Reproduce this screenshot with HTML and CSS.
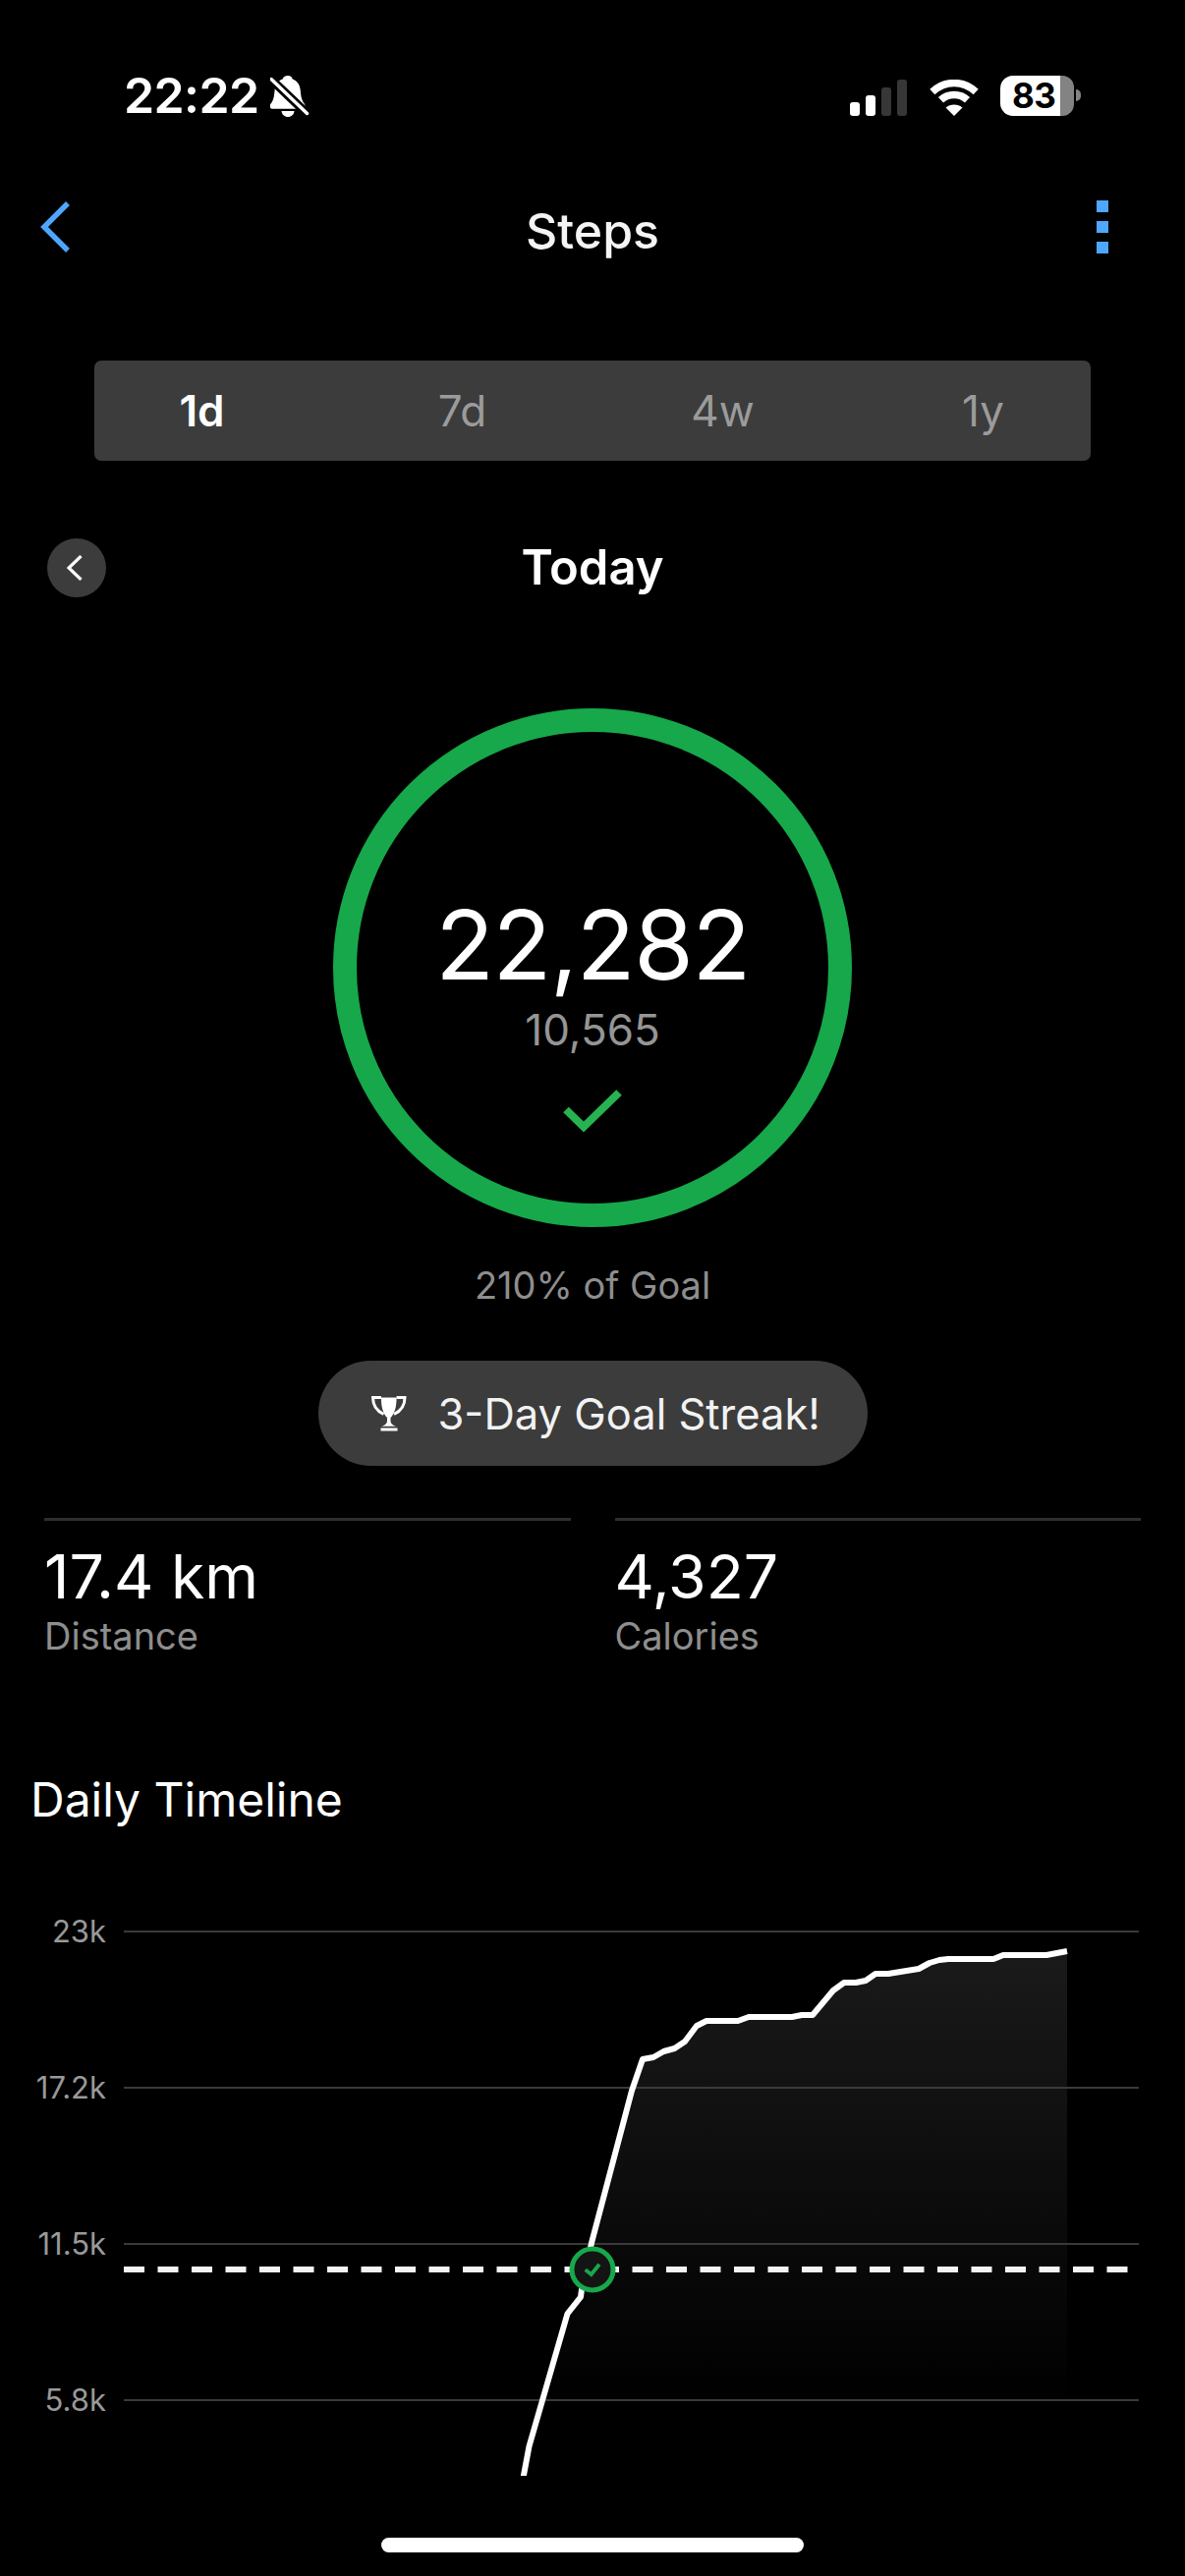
FILE: index.html
```html
<!DOCTYPE html>
<html lang="en">
<head>
<meta charset="utf-8">
<title>Steps</title>
<link rel="stylesheet" href="styles.css">
</head>
<body>
<main class="screen">
  <header class="status">
    <span class="clock">22:22</span>
    <svg class="bell" viewBox="0 0 40 44" aria-hidden="true">
      <path class="white" d="M18 1c2.700 0 4.200 1.500 4.700 3.500 5 1.800 7.500 6 8 11 .4 5 .9 9 2.600 12 .8 1.500 2.200 2.500 2.200 4.300 0 1.700-1.100 3-3 3H2.500c-1.800 0-2.900-1.300-2.900-3 0-1.800 1.600-2.800 2.400-4.300 1.700-3 2.200-7 2.600-12 .5-5 3-9.200 8-11C13.100 2.500 15.300 1 18 1z"/>
      <path class="white" d="M11.500 37h13c-.3 3.500-3 6-6.500 6s-6.200-2.500-6.500-6z"/>
      <path class="gap" d="M-2 2 40 42"/>
      <path class="slash" d="M1 4.500 37.500 39.500"/>
    </svg>
    <div class="status-right">
      <div class="signal">
        <i class="bar b1"></i><i class="bar b2"></i><i class="bar b3 off"></i><i class="bar b4 off"></i>
      </div>
      <svg class="wifi" viewBox="0 0 50 37" aria-hidden="true">
        <path class="wifi-arc outer" d="M2.800 12.500C16 .5 34 .5 47.200 12.500"/>
        <path class="wifi-arc" d="M11.500 20.800C19 13.800 31 13.800 38.500 20.800"/>
        <path class="white" d="M25 37 16.500 28.500C21 24.500 29 24.500 33.500 28.500z"/>
      </svg>
      <div class="battery"><span class="battery-level">83</span><i class="battery-rest"></i><i class="battery-nub"></i></div>
    </div>
  </header>

  <nav class="nav">
    <svg class="chevron" viewBox="0 0 30 52" aria-hidden="true"><path d="M28 2 4 26l24 24"/></svg>
    <h1 class="nav-title">Steps</h1>
    <div class="dots"><i></i><i></i><i></i></div>
  </nav>

  <div class="tabs">
    <span class="tab active">1d</span>
    <span class="tab">7d</span>
    <span class="tab">4w</span>
    <span class="tab">1y</span>
  </div>

  <div class="date-row">
    <span class="round-back">
      <svg viewBox="0 0 16 26" aria-hidden="true"><path d="M14.500 1 2 13l12.500 12"/></svg>
    </span>
    <h2 class="date-title">Today</h2>
    <span></span>
  </div>

  <section class="ring">
    <div class="ring-value">22,282</div>
    <div class="ring-goal">10,565</div>
    <svg class="ring-check" viewBox="0 0 60 44" aria-hidden="true"><path d="M3 20.500 21 38 57 3"/></svg>
  </section>

  <p class="goal-pct">210% of Goal</p>

  <div class="pill">
    <svg class="trophy" viewBox="0 0 36 37" aria-hidden="true">
      <path class="white" d="M10 2.500h15.500c.3 9-2 17-6 20.500v3.500c0 2 1.800 4 5.500 5.200H10.500c3.700-1.200 5.500-3.200 5.500-5.200V23C12 19.500 9.700 11.500 10 2.500z"/>
      <path class="white" d="M9.500 33.500h17v3h-17z"/>
      <path class="handle" d="M10 2.500H1.500c0 8.500 3.500 13.500 11 17M25.500 2.500H34c0 8.500-3.500 13.500-11 17"/>
    </svg>
    <span class="pill-text">3-Day Goal Streak!</span>
  </div>

  <section class="stats">
    <div class="stat">
      <div class="stat-value">17.4 km</div>
      <div class="stat-label">Distance</div>
    </div>
    <div class="stat">
      <div class="stat-value">4,327</div>
      <div class="stat-label">Calories</div>
    </div>
  </section>

  <h3 class="section-title">Daily Timeline</h3>

  <svg class="chart" viewBox="0 1940 1206 600" aria-label="Daily timeline chart">
    <defs>
      <linearGradient id="areaFade" x1="0" y1="1985" x2="0" y2="2450" gradientUnits="userSpaceOnUse">
        <stop offset="0" stop-color="#1a1a1a"/>
        <stop offset="1" stop-color="#000"/>
      </linearGradient>
      <clipPath id="plotClip"><rect x="0" y="1940" width="1206" height="580"/></clipPath>
    </defs>
    <path class="area" fill="url(#areaFade)" d="M533 2520 538.500 2490 577.500 2355 591 2338 592 2330 602 2283 643 2128 654 2096 665 2094 675.500 2088 686.500 2085 697 2078 709 2062 719 2057 751 2057 762 2053 806 2053 816 2051 827 2051 848 2026 859 2018 871 2018 881 2016 891 2009 904 2009 922.500 2006 935 2004 946 1998 956 1995 965 1994 1011 1994 1021 1990 1065 1990 1075.500 1988 1086 1986V2520z"/>
    <g class="grid">
      <path d="M126 1966H1159"/>
      <path d="M126 2125H1159"/>
      <path d="M126 2284H1159"/>
      <path d="M126 2443H1159"/>
    </g>
    <g class="axis">
      <text x="108" y="1965">23k</text>
      <text x="108" y="2124">17.2k</text>
      <text x="108" y="2283">11.5k</text>
      <text x="108" y="2442">5.8k</text>
    </g>
    <path class="goal-line" d="M126 2310H1150"/>
    <g clip-path="url(#plotClip)">
      <path class="trend" d="M531 2530 538.500 2490 577.500 2355 591 2338 592 2330 602 2283 643 2128 654 2096 665 2094 675.500 2088 686.500 2085 697 2078 709 2062 719 2057 751 2057 762 2053 806 2053 816 2051 827 2051 848 2026 859 2018 871 2018 881 2016 891 2009 904 2009 922.500 2006 935 2004 946 1998 956 1995 965 1994 1011 1994 1021 1990 1065 1990 1075.500 1988 1086 1986"/>
    </g>
    <circle class="marker" cx="603" cy="2310" r="21"/>
    <path class="marker-check" d="M595.700 2310.300 601.700 2315 610 2304.700"/>
  </svg>

  <div class="home-bar"></div>
</main>
</body>
</html>
```

FILE: styles.css
```css
* { box-sizing: border-box; margin: 0; padding: 0; }

html, body { background: #000; }

body {
  font-family: "Inter", "Noto Sans", sans-serif;
  color: #fff;
}

.screen {
  position: relative;
  width: 1206px;
  height: 2622px;
  overflow: hidden;
  background: #000;
}

.white { fill: #fff; }

/* status bar */
.status {
  display: flex;
  align-items: center;
  height: 41px;
  margin-top: 77px;
  padding: 0 106px 0 126px;
}

.clock {
  font-size: 50px;
  font-weight: 600;
  line-height: 41px;
  letter-spacing: -0.6px;
}

.bell {
  width: 40px;
  height: 44px;
  margin-left: 11px;
  overflow: hidden;
}

.bell .gap { stroke: #000; stroke-width: 9; fill: none; }
.bell .slash { stroke: #fff; stroke-width: 3.400; stroke-linecap: round; fill: none; }

.status-right {
  display: flex;
  align-items: center;
  margin-left: auto;
}

.signal {
  display: flex;
  align-items: flex-end;
  gap: 6px;
  height: 37px;
  margin-top: 3px;
}

.bar {
  display: block;
  width: 10px;
  background: #fff;
  border-radius: 3px;
}

.bar.off { background: #373737; }
.b1 { height: 14px; }
.b2 { height: 21px; }
.b3 { height: 29px; }
.b4 { height: 37px; }

.wifi {
  width: 50px;
  height: 37px;
  margin: 3px 0 0 23px;
}

.wifi-arc { fill: none; stroke: #fff; stroke-width: 7.500; }

.battery {
  position: relative;
  display: flex;
  width: 82px;
  height: 41px;
  margin-left: 22px;
}

.battery-level {
  display: block;
  width: 61px;
  height: 41px;
  padding-left: 12px;
  background: #fff;
  border-radius: 13px 0 0 13px;
  color: #000;
  font-size: 35px;
  font-weight: 700;
  line-height: 41px;
  letter-spacing: -0.5px;
}

.battery-rest {
  display: block;
  width: 14px;
  height: 41px;
  background: #838383;
  border-radius: 0 12px 12px 0;
}

.battery-nub {
  display: block;
  width: 5px;
  height: 12px;
  margin: 14px 0 0 2px;
  background: #838383;
  border-radius: 0 6px 6px 0;
}

/* nav */
.nav {
  display: grid;
  grid-template-columns: 1fr auto 1fr;
  align-items: center;
  height: 226px;
  padding: 0 78px;
}

.chevron {
  width: 30px;
  height: 52px;
  margin-left: -37px;
}

.chevron path { fill: none; stroke: #4fa6ff; stroke-width: 5.500; }

.nav-title {
  margin-top: 8px;
  font-size: 50px;
  font-weight: 500;
  line-height: 56px;
  color: #f4f4f4;
}

.dots {
  display: flex;
  flex-direction: column;
  gap: 9px;
  justify-self: end;
}

.dots i {
  display: block;
  width: 12px;
  height: 12px;
  background: #4fa6ff;
}

/* tabs */
.tabs {
  display: grid;
  grid-template-columns: repeat(4, 265px);
  justify-content: center;
  align-items: center;
  height: 102px;
  margin: 23px 96px 0;
  background: #3c3c3c;
  border-radius: 7px;
}

.tab {
  font-size: 44px;
  text-align: center;
  color: #9b9b9b;
}

.tab.active {
  color: #fff;
  font-weight: 600;
}

/* date row */
.date-row {
  display: grid;
  grid-template-columns: 1fr auto 1fr;
  align-items: center;
  height: 60px;
  margin-top: 78px;
  padding: 0 48px;
}

.round-back {
  display: flex;
  align-items: center;
  justify-content: center;
  width: 60px;
  height: 60px;
  background: #3c3c3c;
  border-radius: 50%;
}

.round-back svg {
  width: 16px;
  height: 26px;
  margin-right: 5px;
}

.round-back path { fill: none; stroke: #fff; stroke-width: 3.200; }

.date-title {
  margin-top: 1px;
  font-size: 49px;
  font-weight: 600;
  line-height: 60px;
}

/* ring */
.ring {
  display: flex;
  flex-direction: column;
  align-items: center;
  width: 528px;
  height: 528px;
  margin: 114px auto 0;
  padding-top: 157px;
  border: 24px solid #16a84a;
  border-radius: 50%;
}

.ring-value {
  font-size: 98px;
  font-weight: 400;
  line-height: 120px;
  letter-spacing: -1.400px;
}

.ring-goal {
  margin-top: -1px;
  font-size: 44px;
  line-height: 54px;
  color: #959595;
}

.ring-check {
  width: 60px;
  height: 44px;
  margin-top: 34px;
}

.ring-check path { fill: none; stroke: #27b350; stroke-width: 8; }

.goal-pct {
  margin-top: 36px;
  font-size: 38px;
  line-height: 46px;
  text-align: center;
  color: #8e8e8e;
}

/* pill */
.pill {
  display: flex;
  align-items: center;
  gap: 32px;
  width: 559px;
  height: 107px;
  margin: 54px auto 0;
  padding-left: 54px;
  background: #3c3c3c;
  border-radius: 54px;
}

.trophy {
  width: 36px;
  height: 37px;
}

.trophy .handle { fill: none; stroke: #fff; stroke-width: 3; }

.pill-text {
  font-size: 43.500px;
  color: #f2f2f2;
}

/* stats */
.stats {
  display: grid;
  grid-template-columns: 1fr 1fr;
  gap: 45px;
  margin-top: 53px;
  padding: 0 45px;
}

.stat {
  border-top: 3px solid #2e2e2e;
  padding-top: 18px;
}

.stat-value {
  font-size: 62.500px;
  line-height: 76px;
}

.stat-label {
  font-size: 38px;
  line-height: 46px;
  color: #8e8e8e;
}

.section-title {
  margin-top: 114px;
  padding-left: 31px;
  font-size: 48px;
  font-weight: 400;
  line-height: 60px;
}

/* chart */
.chart {
  display: block;
  width: 1206px;
  height: 600px;
  margin-top: 78px;
}

.grid path { stroke: #3a3a3a; stroke-width: 2; fill: none; }

.axis text {
  font-size: 31px;
  fill: #999;
  text-anchor: end;
  dominant-baseline: central;
}

.goal-line { stroke: #f4f4f4; stroke-width: 6; stroke-dasharray: 21 13.500; fill: none; }
.trend { stroke: #fff; stroke-width: 6; fill: none; stroke-linejoin: round; }
.marker { fill: #141414; stroke: #16a84a; stroke-width: 5; }
.marker-check { fill: none; stroke: #16a84a; stroke-width: 3.800; }

.home-bar {
  position: absolute;
  left: 388px;
  bottom: 24px;
  width: 430px;
  height: 15px;
  background: #fff;
  border-radius: 8px;
}
```
